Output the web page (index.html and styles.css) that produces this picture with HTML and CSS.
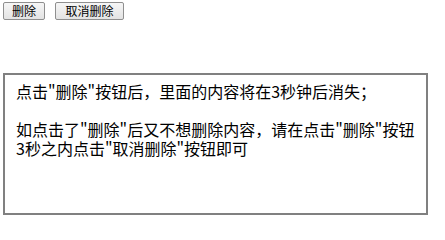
FILE: index.html
```html
<!DOCTYPE html>
<html lang="zh-CN">
<head>
<meta charset="utf-8">
<title>删除</title>
<link rel="stylesheet" href="styles.css">
</head>
<body>
<div class="toolbar">
  <button class="btn btn-del" type="button">删除</button>
  <button class="btn btn-cancel" type="button">取消删除</button>
</div>
<div class="box">点击"删除"按钮后，里面的内容将在3秒钟后消失；<br><br>如点击了"删除"后又不想删除内容，请在点击"删除"按钮<br>3秒之内点击"取消删除"按钮即可</div>
</body>
</html>
```
FILE: styles.css
```css
html, body {
  margin: 0;
  padding: 0;
  background: #ffffff;
}
body {
  padding: 2px 3px;
  font-family: "Noto Sans CJK SC", "DejaVu Sans", sans-serif;
  color: #000;
}
.toolbar {
  display: flex;
  gap: 10px;
  height: 18px;
}
.btn {
  box-sizing: border-box;
  height: 18px;
  padding: 0;
  margin: 0;
  font-family: "Noto Sans CJK SC", "DejaVu Sans", sans-serif;
  font-size: 12px;
  line-height: 16px;
  color: #000;
  background: linear-gradient(#f6f6f6, #e3e3e3);
  border: 1px solid #8f8f8f;
  border-radius: 2px;
}
.btn-del { width: 42px; }
.btn-cancel { width: 69px; }
.box {
  box-sizing: border-box;
  width: 425px;
  height: 142px;
  margin-top: 53px;
  border: 2px solid #808080;
  padding: 7px 6px 0 11px;
  font-size: 16px;
  line-height: 19px;
  white-space: nowrap;
}
```
